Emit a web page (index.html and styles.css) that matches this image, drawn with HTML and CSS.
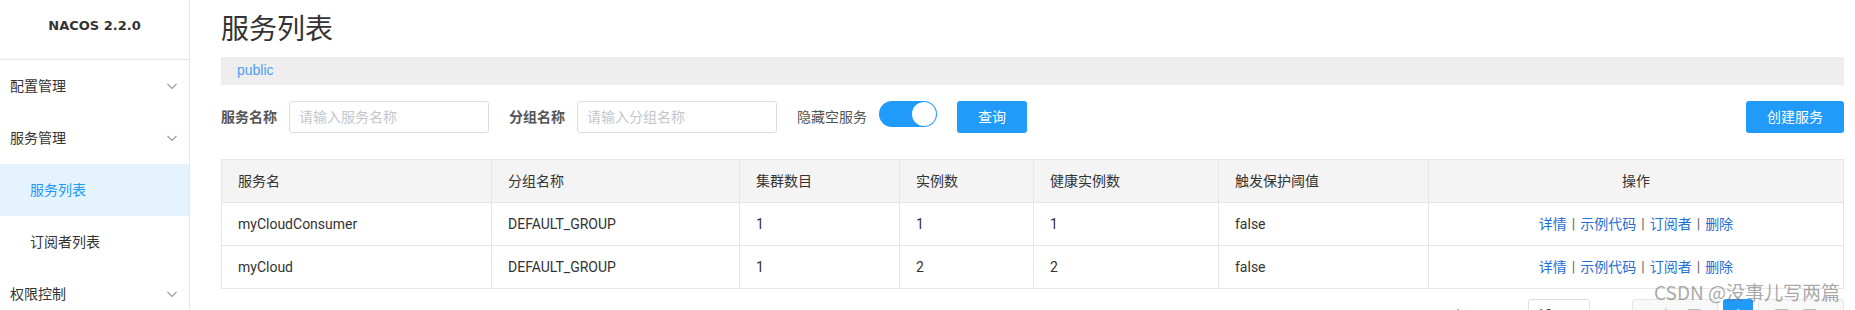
FILE: index.html
```html
<!DOCTYPE html>
<html lang="zh-CN">
<head>
<meta charset="utf-8">
<title>服务列表</title>
<link rel="stylesheet" href="styles.css">
</head>
<body>
<div class="app">
  <aside class="sidebar">
    <div class="logo">NACOS 2.2.0</div>
    <nav class="menu">
      <div class="menu-item"><span>配置管理</span><svg class="chev" width="12" height="12" viewBox="0 0 12 12"><polyline points="1.5,4 6,8.5 10.5,4" fill="none" stroke="#9a9a9a" stroke-width="1.1"/></svg></div>
      <div class="menu-item"><span>服务管理</span><svg class="chev" width="12" height="12" viewBox="0 0 12 12"><polyline points="1.5,4 6,8.5 10.5,4" fill="none" stroke="#9a9a9a" stroke-width="1.1"/></svg></div>
      <div class="menu-item sub active"><span>服务列表</span></div>
      <div class="menu-item sub"><span>订阅者列表</span></div>
      <div class="menu-item"><span>权限控制</span><svg class="chev" width="12" height="12" viewBox="0 0 12 12"><polyline points="1.5,4 6,8.5 10.5,4" fill="none" stroke="#9a9a9a" stroke-width="1.1"/></svg></div>
    </nav>
  </aside>
  <main class="main">
    <h1 class="title">服务列表</h1>
    <div class="ns-bar"><span class="ns">public</span></div>
    <div class="form-row">
      <div class="field">
        <label class="label">服务名称</label>
        <div class="input"><span class="ph">请输入服务名称</span></div>
      </div>
      <div class="field">
        <label class="label">分组名称</label>
        <div class="input"><span class="ph">请输入分组名称</span></div>
      </div>
      <div class="field">
        <label class="label light">隐藏空服务</label>
        <div class="switch"><span class="knob"></span></div>
      </div>
      <button class="btn">查询</button>
      <button class="btn btn-create">创建服务</button>
    </div>
    <table class="grid">
      <colgroup>
        <col class="c1"><col class="c2"><col class="c3"><col class="c4"><col class="c5"><col class="c6"><col class="c7">
      </colgroup>
      <thead>
        <tr><th>服务名</th><th>分组名称</th><th>集群数目</th><th>实例数</th><th>健康实例数</th><th>触发保护阈值</th><th class="center">操作</th></tr>
      </thead>
      <tbody>
        <tr><td>myCloudConsumer</td><td>DEFAULT_GROUP</td><td>1</td><td>1</td><td>1</td><td>false</td>
          <td class="center"><a>详情</a><span class="sep">|</span><a>示例代码</a><span class="sep">|</span><a>订阅者</a><span class="sep">|</span><a>删除</a></td></tr>
        <tr><td>myCloud</td><td>DEFAULT_GROUP</td><td>1</td><td>2</td><td>2</td><td>false</td>
          <td class="center"><a>详情</a><span class="sep">|</span><a>示例代码</a><span class="sep">|</span><a>订阅者</a><span class="sep">|</span><a>删除</a></td></tr>
      </tbody>
    </table>
    <div class="pager">
      <span class="pg-label">每页显示</span>
      <div class="pg-select">10</div>
      <div class="pg-btn">&lt; 上一页</div>
      <div class="pg-num">1</div>
      <div class="pg-btn">下一页 &gt;</div>
    </div>
    <div class="watermark">CSDN @没事儿写两篇</div>
  </main>
</div>
</body>
</html>
```
FILE: styles.css
```css
html, body {
  margin: 0;
  padding: 0;
  height: 310px;
  overflow: hidden;
  background: #fff;
}
body {
  font-family: Roboto, "Noto Sans CJK SC", sans-serif;
  font-size: 14px;
  color: #333;
}
.app {
  display: flex;
  height: 310px;
}
.sidebar {
  width: 189px;
  flex: none;
  border-right: 1px solid #e6e6e6;
}
.logo {
  height: 59px;
  line-height: 52px;
  text-align: center;
  font-family: "DejaVu Sans", Verdana, sans-serif;
  font-weight: 700;
  font-size: 13px;
  color: #333;
  border-bottom: 1px solid #e6e6e6;
}
.menu-item {
  height: 52px;
  display: flex;
  align-items: center;
  justify-content: space-between;
  padding: 0 11px 0 10px;
  line-height: 20px;
  color: #333;
}
.menu-item.sub {
  padding-left: 30px;
}
.menu-item.active {
  background: #e5f3ff;
  color: #209bfa;
}
.chev {
  display: block;
}
.main {
  flex: 1;
  padding: 10px 11px 0 31px;
  position: relative;
  min-width: 0;
}
.title {
  margin: 0 0 7px;
  font-size: 28px;
  font-weight: 400;
  line-height: 40px;
  height: 40px;
  color: #333;
}
.ns-bar {
  height: 28px;
  line-height: 27px;
  background: #eee;
  padding-left: 16px;
}
.ns {
  color: #4f9ef5;
  font-family: "Liberation Sans", Arial, sans-serif;
  font-size: 14px;
}
.form-row {
  display: flex;
  align-items: flex-start;
  margin-top: 16px;
  height: 32px;
}
.field {
  display: flex;
  align-items: center;
  gap: 12px;
  margin-right: 20px;
}
.label {
  font-weight: 700;
  color: #555;
  line-height: 32px;
}
.label.light {
  font-weight: 400;
  color: #555;
}
.input {
  width: 189px;
  height: 30px;
  border: 1px solid #dcdee3;
  border-radius: 3px;
  display: flex;
  align-items: center;
  padding-left: 9px;
}
.ph {
  color: #c4c6cc;
  line-height: 20px;
}
.switch {
  width: 58px;
  height: 26px;
  border-radius: 13px;
  background: #209bfa;
  display: flex;
  align-items: center;
  justify-content: flex-end;
  padding: 0 1px;
  box-sizing: border-box;
  align-self: flex-start;
}
.knob {
  width: 24px;
  height: 24px;
  border-radius: 50%;
  background: #fff;
}
.btn {
  height: 32px;
  width: 70px;
  border: none;
  border-radius: 3px;
  background: #209bfa;
  color: #fff;
  font-family: Roboto, "Noto Sans CJK SC", sans-serif;
  font-size: 14px;
  padding: 0;
  line-height: 32px;
}
.btn-create {
  width: 98px;
  margin-left: auto;
}
.grid {
  margin-top: 26px;
  width: 100%;
  border-collapse: collapse;
  table-layout: fixed;
  border: 1px solid #e6e6e6;
}
.c1 { width: 270px; }
.c2 { width: 248px; }
.c3 { width: 160px; }
.c4 { width: 134px; }
.c5 { width: 185px; }
.c6 { width: 210px; }
.c7 { width: auto; }
.grid th, .grid td {
  height: 42px;
  padding: 0 16px;
  border: 1px solid #e6e6e6;
  text-align: left;
  font-weight: 400;
  line-height: 20px;
  color: #333;
  white-space: nowrap;
}
.grid th {
  background: #f4f4f4;
}
.grid .center {
  text-align: center;
}
.grid a {
  color: #1f6fd6;
}
.sep {
  color: #666;
  margin: 0 5px;
}
.pager {
  display: flex;
  justify-content: flex-end;
  align-items: center;
  margin-top: 10px;
  height: 32px;
  color: #666;
}
.pg-label {
  margin-right: 18px;
}
.pg-select {
  width: 52px;
  height: 30px;
  border: 1px solid #dcdee3;
  border-radius: 3px;
  padding-left: 8px;
  line-height: 30px;
  margin-right: 42px;
  color: #333;
}
.pg-btn {
  width: 84px;
  height: 30px;
  border: 1px solid #e6e6e6;
  border-radius: 3px;
  background: #f8f8f8;
  color: #bbb;
  text-align: center;
  line-height: 30px;
}
.pg-num {
  width: 30px;
  height: 32px;
  background: #209bfa;
  color: #fff;
  text-align: center;
  line-height: 32px;
  margin: 0 5px;
  border-radius: 3px;
}
.watermark {
  position: absolute;
  right: 15px;
  top: 281px;
  font-family: "Noto Sans CJK SC", sans-serif;
  font-size: 19px;
  line-height: 22px;
  color: rgba(110, 110, 110, 0.6);
}
```
